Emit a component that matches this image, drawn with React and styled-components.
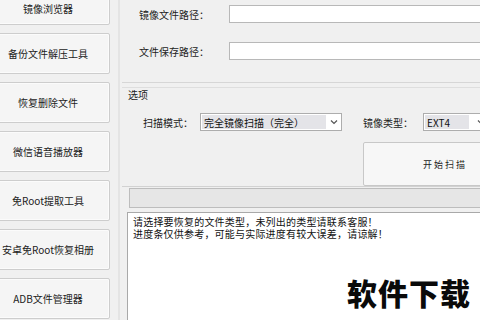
import React from "react";
import styled, { createGlobalStyle } from "styled-components";

const Global = createGlobalStyle`
  html, body { margin: 0; padding: 0; background: #f0f0f0; }
  body { font-family: "Noto Sans CJK SC", "Noto Sans", sans-serif; }
`;

const Screen = styled.div`
  position: relative;
  width: 480px;
  height: 320px;
  overflow: hidden;
  display: flex;
  background: #f0f0f0;
  color: #1e1e1e;
  font-size: 10px;
`;

const Sidebar = styled.div`
  width: 120px;
  flex: none;
  display: flex;
  flex-direction: column;
  gap: 8px;
  margin-top: -16px;
  padding-right: 8px;
  box-sizing: border-box;
  border-right: 2px solid #e4e4e4;
`;

const SideButton = styled.div`
  height: 41px;
  flex: none;
  margin-left: -14px;
  box-sizing: border-box;
  padding-top: ${(p) => (p.$first ? 7 : 0)}px;
  border: 1px solid #cdcdcd;
  border-radius: 2px;
  background: #f5f5f5;
  box-shadow: inset 0 0 0 1px #fbfbfb;
  display: flex;
  align-items: center;
  justify-content: center;
  font-size: 10px;
  color: #222;
  white-space: nowrap;
`;

const Main = styled.div`
  flex: 1;
  display: flex;
  flex-direction: column;
  min-width: 0;
  padding-left: 2px;
`;

const PathGroup = styled.div`
  height: 83px;
  box-sizing: border-box;
  border-bottom: 1px solid #d6d6d6;
  padding-top: 5px;
  display: grid;
  grid-template-columns: 87px 300px;
  column-gap: 20px;
  row-gap: 19px;
  align-content: start;
`;

const Label = styled.div`
  font-size: 10px;
  color: #222;
  white-space: nowrap;
  display: flex;
  align-items: center;
  justify-content: ${(p) => (p.$right ? "flex-end" : "flex-start")};
  width: ${(p) => (p.$w ? `${p.$w}px` : "auto")};
  margin-left: ${(p) => p.$ml || 0}px;
  flex: none;
`;

const TextInput = styled.div`
  height: 18px;
  box-sizing: border-box;
  background: #fff;
  border: 1px solid #b8b8b8;
  border-right: none;
`;

const OptionsGroup = styled.div`
  margin-top: 4px;
  height: 100px;
  box-sizing: border-box;
  border-top: 1px solid #dedede;
  border-bottom: 1px solid #d2d2d2;
  display: flex;
  flex-direction: column;
`;

const GroupTitle = styled.div`
  font-size: 10px;
  line-height: 12px;
  color: #222;
  padding-left: 6px;
  margin-top: 1px;
`;

const OptionRow = styled.div`
  display: flex;
  align-items: center;
  margin-top: 12px;
  padding-left: 21px;
  height: 18px;
`;

const Combo = styled.div`
  width: ${(p) => p.$w}px;
  height: 18px;
  flex: none;
  box-sizing: border-box;
  border: 1px solid #adadad;
  background: #fff;
  display: flex;
  align-items: stretch;
`;

const ComboValue = styled.div`
  width: ${(p) => p.$w}px;
  flex: none;
  background: #e4e4e8;
  margin: 1px;
  padding-left: 2px;
  display: flex;
  align-items: center;
  font-size: 10px;
  color: #111;
  white-space: nowrap;
`;

const Chevron = styled.div`
  flex: 1;
  display: flex;
  align-items: center;
  justify-content: center;
`;

const ActionRow = styled.div`
  display: flex;
  margin-top: 11px;
  padding-left: 241px;
`;

const StartButton = styled.div`
  width: 162px;
  height: 44px;
  flex: none;
  box-sizing: border-box;
  border: 1px solid #c8c8c8;
  border-radius: 2px;
  background: #f7f7f7;
  display: flex;
  align-items: center;
  justify-content: center;
  padding-left: 2px;
  font-size: 9px;
  letter-spacing: 2px;
  color: #222;
`;

const Progress = styled.div`
  margin-top: 1px;
  margin-left: 7px;
  height: 20px;
  box-sizing: border-box;
  border: 1px solid #bdbdbd;
  border-right: none;
  background: #e6e6e6;
`;

const Log = styled.div`
  margin-top: 4px;
  margin-left: 5px;
  flex: 1;
  box-sizing: border-box;
  background: #fff;
  border-left: 1px solid #a9a9a9;
  border-top: 1px solid #a9a9a9;
  padding: 3px 0 0 5px;
  font-family: "Noto Sans CJK SC", sans-serif;
  font-size: 10px;
  line-height: 12px;
  letter-spacing: 0.2px;
  color: #111;
  white-space: nowrap;
`;

const Watermark = styled.div`
  position: absolute;
  left: 347px;
  top: 274px;
  font-family: "Noto Sans CJK SC", sans-serif;
  font-weight: 900;
  font-size: 30px;
  line-height: 36px;
  color: #0a0a0a;
  letter-spacing: 1px;
`;

const sideItems = [
  "镜像浏览器",
  "备份文件解压工具",
  "恢复删除文件",
  "微信语音播放器",
  "免Root提取工具",
  "安卓免Root恢复相册",
  "ADB文件管理器",
];

const ChevronIcon = () => (
  <svg width="8" height="6" viewBox="0 0 8 6">
    <path d="M1 1.5 L4 4.5 L7 1.5" fill="none" stroke="#555" strokeWidth="1.2" />
  </svg>
);

export default function App() {
  return (
    <>
      <Global />
      <Screen>
        <Sidebar>
          {sideItems.map((t, i) => (
            <SideButton key={t} $first={i === 0}>
              {t}
            </SideButton>
          ))}
        </Sidebar>
        <Main>
          <PathGroup>
            <Label $right>镜像文件路径：</Label>
            <TextInput />
            <Label $right>文件保存路径：</Label>
            <TextInput />
          </PathGroup>
          <OptionsGroup>
            <GroupTitle>选项</GroupTitle>
            <OptionRow>
              <Label $w={57}>扫描模式：</Label>
              <Combo $w={142}>
                <ComboValue $w={122}>完全镜像扫描（完全）</ComboValue>
                <Chevron>
                  <ChevronIcon />
                </Chevron>
              </Combo>
              <Label $w={60} $ml={21}>镜像类型：</Label>
              <Combo $w={70}>
                <ComboValue $w={42}>EXT4</ComboValue>
                <Chevron>
                  <ChevronIcon />
                </Chevron>
              </Combo>
            </OptionRow>
            <ActionRow>
              <StartButton>开始扫描</StartButton>
            </ActionRow>
          </OptionsGroup>
          <Progress />
          <Log>
            请选择要恢复的文件类型，未列出的类型请联系客服！
            <br />
            进度条仅供参考，可能与实际进度有较大误差，请谅解！
          </Log>
        </Main>
        <Watermark>软件下载</Watermark>
      </Screen>
    </>
  );
}
